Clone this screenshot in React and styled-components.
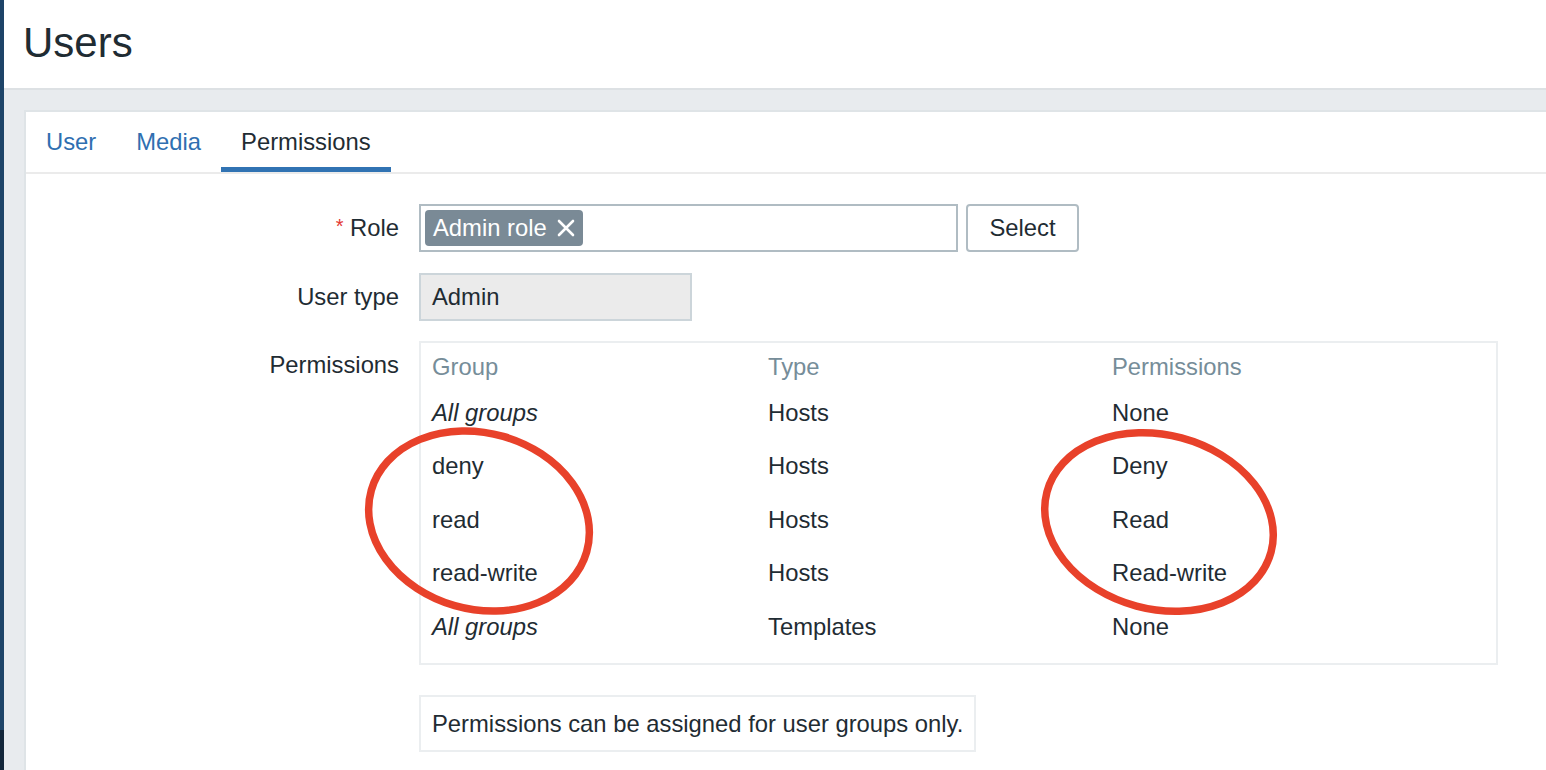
import React from "react";
import styled, { createGlobalStyle } from "styled-components";

const GlobalStyle = createGlobalStyle`
  html, body {
    margin: 0;
    padding: 0;
    height: 100%;
    overflow: hidden;
    background: #ffffff;
  }
  body {
    font-family: "Liberation Sans", Arial, Helvetica, sans-serif;
    font-size: 23.8px;
    color: #1f2c33;
  }
  * {
    box-sizing: border-box;
  }
`;

const rows = [
  { group: "All groups", all: true, type: "Hosts", perm: "None" },
  { group: "deny", type: "Hosts", perm: "Deny" },
  { group: "read", type: "Hosts", perm: "Read" },
  { group: "read-write", type: "Hosts", perm: "Read-write" },
  { group: "All groups", all: true, type: "Templates", perm: "None" },
];

const tabs = ["User", "Media", "Permissions"];

function CloseIcon() {
  return (
    <svg width="18" height="18" viewBox="0 0 18 18" fill="none">
      <path
        d="M2 2 L16 16 M16 2 L2 16"
        stroke="#ffffff"
        strokeWidth="2.6"
        strokeLinecap="round"
      />
    </svg>
  );
}

function Marks() {
  // hand drawn red rings on top of the screenshot
  return (
    <Overlay width="1546" height="770" viewBox="0 0 1546 770">
      <ellipse
        cx="479"
        cy="521"
        rx="112"
        ry="88"
        transform="rotate(16 479 521)"
        fill="none"
        stroke="#e8412a"
        strokeWidth="7.5"
      />
      <ellipse
        cx="1159"
        cy="522"
        rx="116"
        ry="87"
        transform="rotate(15 1159 522)"
        fill="none"
        stroke="#e8412a"
        strokeWidth="7.5"
      />
    </Overlay>
  );
}

export default function App() {
  return (
    <Page>
      <GlobalStyle />
      <Sidebar />
      <Main>
        <Header>
          <Title>Users</Title>
        </Header>
        <Content>
          <Panel>
            <TabBar>
              {tabs.map((t) => (
                <Tab key={t} active={t === "Permissions"}>
                  {t}
                </Tab>
              ))}
            </TabBar>

            <Form>
              <Label>
                <Required>*</Required> Role
              </Label>
              <FieldRow>
                <MultiSelect>
                  <Chip>
                    Admin role
                    <CloseIcon />
                  </Chip>
                </MultiSelect>
                <Button>Select</Button>
              </FieldRow>

              <Label>User type</Label>
              <ReadOnly>Admin</ReadOnly>

              <Label>Permissions</Label>
              <PermTable>
                <HeadCell>Group</HeadCell>
                <HeadCell>Type</HeadCell>
                <HeadCell>Permissions</HeadCell>
                {rows.map((r, i) => (
                  <React.Fragment key={i}>
                    <Cell italic={r.all}>{r.group}</Cell>
                    <Cell>{r.type}</Cell>
                    <Cell>{r.perm}</Cell>
                  </React.Fragment>
                ))}
              </PermTable>

              <span />
              <NoteWrap>
                <Note>Permissions can be assigned for user groups only.</Note>
              </NoteWrap>
            </Form>
          </Panel>
        </Content>
      </Main>
      <Marks />
    </Page>
  );
}

const Page = styled.div`
  position: relative;
  display: flex;
  width: 1546px;
  height: 770px;
  overflow: hidden;
`;

const Sidebar = styled.div`
  width: 4px;
  flex-shrink: 0;
  background: linear-gradient(
    to bottom,
    #1e4468 0,
    #1e4468 730px,
    #13263a 730px
  );
`;

const Main = styled.div`
  flex: 1;
  display: flex;
  flex-direction: column;
  min-width: 0;
`;

const Header = styled.div`
  height: 90px;
  display: flex;
  align-items: center;
  padding-left: 19px;
  padding-bottom: 2px;
  background: #ffffff;
  border-bottom: 2px solid #dde1e4;
`;

const Title = styled.h1`
  margin: 0;
  font-size: 42px;
  font-weight: normal;
  color: #1f2c33;
`;

const Content = styled.div`
  flex: 1;
  background: #e8ebee;
  padding: 20px 0 0 20px;
  display: flex;
`;

const Panel = styled.div`
  flex: 1;
  background: #ffffff;
  border-top: 2px solid #dfe4e7;
  border-left: 2px solid #dfe4e7;
`;

const TabBar = styled.div`
  display: flex;
  height: 62px;
  border-bottom: 2px solid #ebebeb;
`;

const Tab = styled.div`
  height: 60px;
  line-height: 60px;
  padding: 0 20px;
  color: ${(p) => (p.active ? "#1f2c33" : "#2f6fb1")};
  box-shadow: ${(p) => (p.active ? "inset 0 -5px 0 #3173b3" : "none")};
`;

const Form = styled.div`
  display: grid;
  grid-template-columns: 373px 1fr;
  column-gap: 20px;
  row-gap: 20px;
  padding-top: 30px;
  align-items: start;
`;

const Label = styled.div`
  text-align: right;
  line-height: 48px;
  white-space: nowrap;
`;

const Required = styled.span`
  color: #e33734;
  font-size: 20px;
  position: relative;
  top: -3px;
`;

const FieldRow = styled.div`
  display: flex;
  gap: 8px;
`;

const MultiSelect = styled.div`
  width: 539px;
  height: 48px;
  border: 2px solid #b0bcc3;
  padding: 4px;
  display: flex;
`;

const Chip = styled.div`
  display: flex;
  align-items: center;
  gap: 10px;
  height: 36px;
  padding: 0 8px 0 8px;
  border-radius: 4px;
  background: #7a8a96;
  color: #ffffff;
`;

const Button = styled.button`
  width: 113px;
  height: 48px;
  border: 2px solid #b0bcc3;
  border-radius: 4px;
  background: #ffffff;
  font-family: inherit;
  font-size: 23.8px;
  color: #1f2c33;
  padding: 0;
`;

const ReadOnly = styled.div`
  width: 273px;
  height: 48px;
  line-height: 44px;
  padding-left: 11px;
  background: #ebebeb;
  border: 2px solid #ccd5da;
`;

const PermTable = styled.div`
  width: 1079px;
  border: 2px solid #ebeef0;
  padding: 5px 11px 9px;
  display: grid;
  grid-template-columns: 336px 344px 1fr;
  grid-template-rows: 38px repeat(5, 53.5px);
  align-items: center;
`;

const HeadCell = styled.div`
  color: #768d99;
`;

const Cell = styled.div`
  font-style: ${(p) => (p.italic ? "italic" : "normal")};
`;

const NoteWrap = styled.div`
  padding-top: 10px;
`;

const Note = styled.div`
  display: inline-block;
  height: 57px;
  line-height: 53px;
  padding: 0 11px;
  border: 2px solid #ebeef0;
`;

const Overlay = styled.svg`
  position: absolute;
  top: 0;
  left: 0;
  pointer-events: none;
`;
